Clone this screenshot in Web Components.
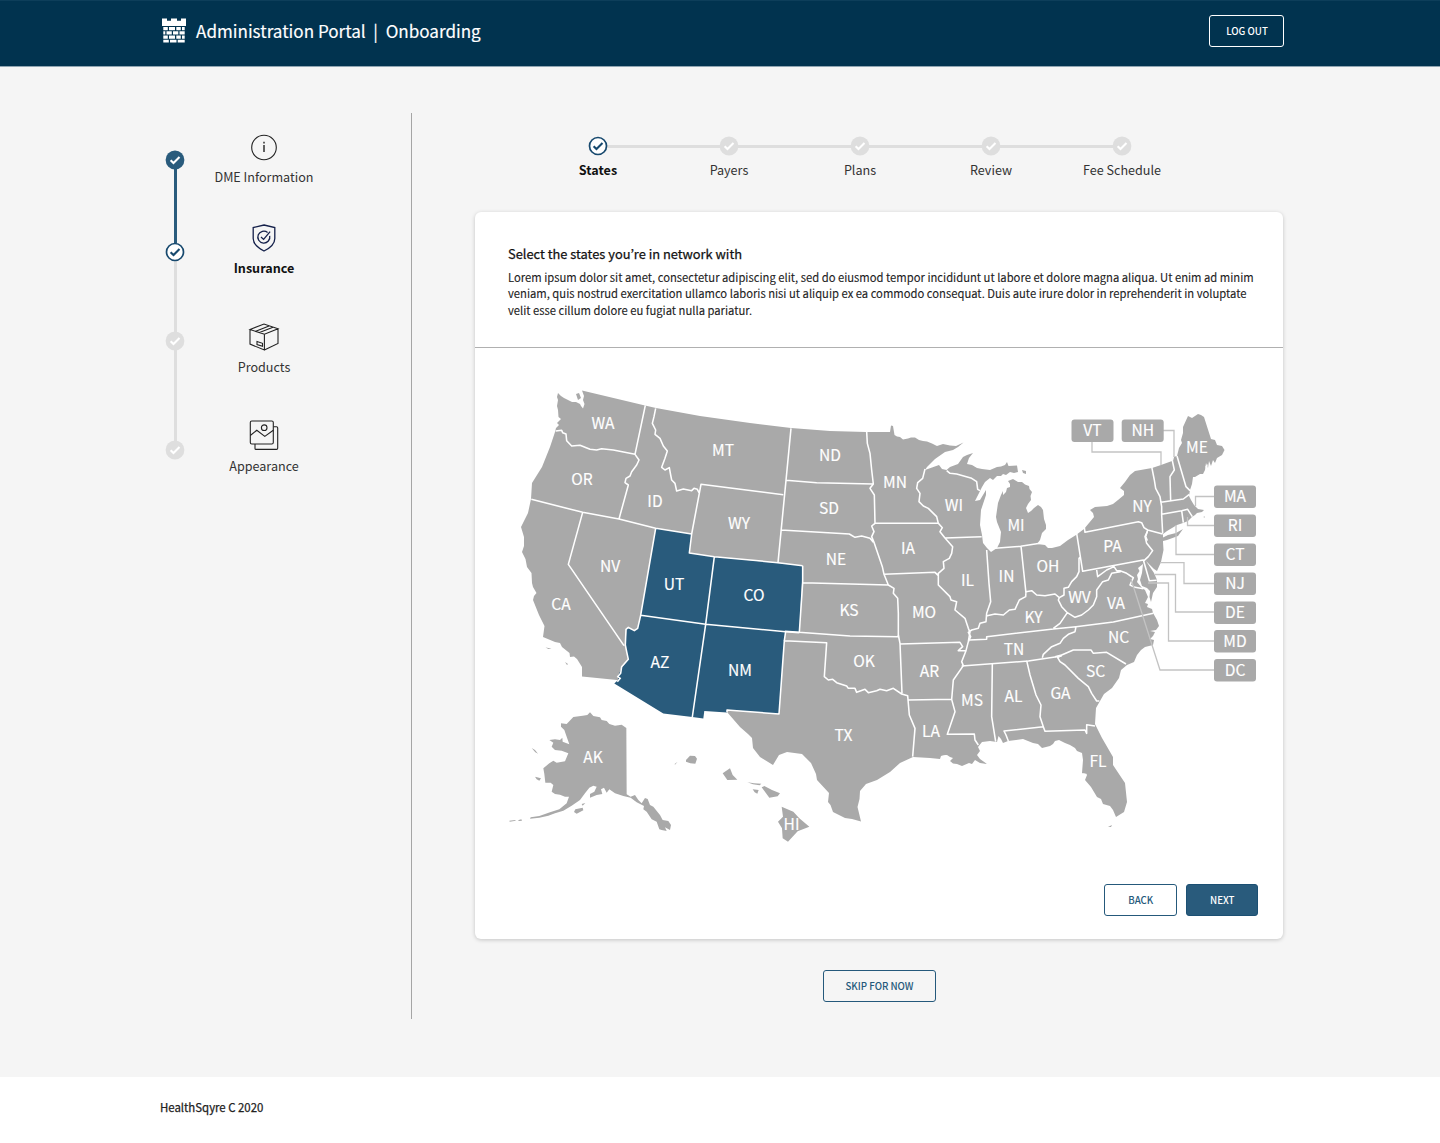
<!DOCTYPE html>
<html lang="en">
<head>
<meta charset="utf-8">
<title>Administration Portal | Onboarding</title>
<style>
body{margin:0;background:#f5f5f5;font-family:"Noto Sans CJK JP","Noto Sans",sans-serif;color:#222}
</style>
</head>
<body>
<onboarding-page></onboarding-page>
<script>
const define=(name,html)=>customElements.define(name,class extends HTMLElement{
  connectedCallback(){
    if(this.shadowRoot)return;
    const t=document.createElement('template');
    t.innerHTML=typeof html==='function'?html(this):html;
    this.attachShadow({mode:'open'}).append(t.content.cloneNode(true));
  }
});

define('castle-logo',`<style>:host{display:block;width:24px;height:25px}svg{display:block}</style>
<svg width="24" height="25" viewBox="0 0 24 25" fill="#fff">
<path d="M0 .5h5v2.300h4V.5h6v2.300h4V.5h5V8H0z"/>
<path d="M1.300 9h4.500v3.300H1.300zM7 9h6v3.300H7zM14.300 9h4.500v3.300h-4.500zM20 9h2.700v3.300H20zM1.300 13.300h2v3.200h-2zM4.500 13.300h5.300v3.200H4.500zM11 13.300h5.300v3.200H11zM17.500 13.300h5.200v3.200h-5.200zM1.300 17.500h4.500v3.200H1.300zM7 17.500h6v3.200H7zM14.300 17.500h4.500v3.200h-4.500zM20 17.500h2.700v3.200H20zM1.300 21.700h5.500v2.800H1.300zM8 21.700h6.500v2.800H8zM15.700 21.700h7v2.800h-7z"/></svg>`);

define('app-button',`<style>
:host{display:block}
button{box-sizing:border-box;display:block;width:100%;height:32px;padding:0 0 0 1px;border:1px solid #25597b;border-radius:3px;background:#fff;color:#25597b;font:500 9.700px/30px "Noto Sans CJK JP","Noto Sans",sans-serif;text-align:center}
:host([kind=solid]) button{background:#295b7c;border-color:#1c5073;color:#fff}
:host([kind=ghost]) button{background:transparent;border-color:#fff;color:#fff}
:host([kind=plain]) button{background:transparent}
</style><button><slot></slot></button>`);

define('app-header',`<style>
:host{display:flex;box-sizing:border-box;height:67px;padding:0 156px 5px 162px;align-items:center;justify-content:space-between;background:#01334f;border-top:1px solid #0d3e5a;border-bottom:1px solid #8fa5b2}
.brand{display:flex;align-items:center;gap:10px;color:#fff;font-size:17.080px;line-height:26px}
.brand span{white-space:pre;-webkit-text-stroke:.15px}
castle-logo{margin-top:-1px}
app-button{width:75px}
</style><div class="brand"><castle-logo></castle-logo><span><slot></slot></span></div><app-button kind="ghost">LOG OUT</app-button>`);

define('check-dot',el=>{
  const s=el.getAttribute('state');
  const fill=s==='done'?'#295b7c':s==='current'?'#fff':'#dedede', mark=s==='current'?'#17496e':'#fff';
  return `<style>:host{display:block;width:20px;height:20px;position:relative}svg{display:block}</style>
<svg width="20" height="20" viewBox="0 0 20 20"><circle cx="10" cy="10" r="${s==='current'?8.5:9.4}" fill="${fill}" ${s==='current'?'stroke="#17496e" stroke-width="1.700"':''}/>
<path d="M5.600 10.200l2.900 2.900 6-6" fill="none" stroke="${mark}" stroke-width="2.100"/></svg>`});

const icons={
 info:`<circle cx="15" cy="14.500" r="12.300"/><path d="M15 12v7M15 8.800v1.700" stroke-width="1.400"/>`,
 shield:`<g stroke="#14204a" stroke-width="1.300"><path d="M15 2l10.800 2.600v10.800c0 5.400-5.500 9.900-10.800 12.600C9.700 25.300 4.200 20.800 4.200 15.400V4.600z"/><path d="M18.600 9.400a6 6 0 1 0 2.100 3.400"/><path d="M12 14l2.600 2.400 6.500-7.800"/></g>`,
 box:`<path d="M1 7.500L15 2l14 4.800-13.600 5.400zM1 7.500v14.600L15.400 28V12.200M15.400 28L29 21.500V6.800M6.800 9.200L20 3.900M10.500 10.500L24 5.200M8 19.500l5.500 1.800v3l-5.500-1.800z"/>`,
 image:`<rect x="1.300" y="1" width="23" height="23" rx="1.500"/><path d="M6 24v4.400q0 1 1 1h20.500q1.200 0 1.200-1.200V8q0-1.200-1.200-1.200h-3M1.300 15.500l6.500-5.300 8 6.200 8.500-6.200"/><circle cx="15.200" cy="7.700" r="2.800"/>`
};
define('side-step',el=>`<style>
:host{display:flex;flex-direction:column;align-items:center;gap:5px}
:host([icon=info]){gap:4px}:host([icon=image]){gap:6px}
svg{display:block;overflow:visible}
.l{font-size:12.600px;line-height:20px;white-space:nowrap;color:#333}
:host([current]) .l{font-weight:700;color:#111}
</style><svg width="30" height="30" viewBox="0 0 30 30" fill="none" stroke="#222" stroke-width="1.100">${icons[el.getAttribute('icon')]}</svg><div class="l"><slot></slot></div>`);

define('side-nav',`<style>
:host{display:flex;box-sizing:border-box;width:252px;height:906px;border-right:1px solid #a5a5a5;padding:20px 0 0 5px}
.rail{display:flex;flex-direction:column;align-items:center;width:20px;padding-top:17px}
.line{width:3px;height:74px;margin:-1px 0;background:#dedede}
.steps{display:flex;flex-direction:column;align-items:center;width:158px}
side-step:nth-child(2){margin-top:36px}side-step:nth-child(3){margin-top:44px}side-step:nth-child(4){margin-top:43px}
</style>
<div class="rail"><check-dot state="done"></check-dot><div class="line" style="background:#295b7c"></div><check-dot state="current"></check-dot><div class="line" style="height:71px"></div><check-dot></check-dot><div class="line" style="height:91px"></div><check-dot></check-dot></div>
<div class="steps"><side-step icon="info">DME Information</side-step><side-step icon="shield" current>Insurance</side-step><side-step icon="box">Products</side-step><side-step icon="image">Appearance</side-step></div>`);

define('top-step',el=>`<style>
:host{display:block;width:131px}
.d{display:flex;align-items:center}.d i{flex:1;height:3px;background:#dedede;margin:0 -1px}
:host([first]) .d i:first-child,:host([last]) .d i:last-child{background:none}
.l{text-align:center;font-size:12.600px;line-height:20px;margin-top:4px;color:#333}
:host([first]) .l{font-weight:700;color:#111}
</style><div class="d"><i></i><check-dot state="${el.hasAttribute('first')?'current':''}"></check-dot><i></i></div><div class="l"><slot></slot></div>`);

const labels=[['WA',603,423.5],['OR',582,479.5],['ID',655,501.5],['MT',723,450],['WY',739,523.5],['ND',830,455.500],['SD',829,508],['NE',836,559.5],['KS',849,610.500],['MN',895,482],['WI',954,505.5],['MI',1016,525.500],['IA',908,548.500],['IL',967.500,580],['IN',1006.500,576.500],['OH',1048,566.500],['MO',924,612],['NV',610,566.500],['UT',674,584],['CO',754,595.500],['CA',561,604],['AZ',660,662],['NM',740,670],['AK',593,757.5],['HI',791.500,824],['TX',843.500,735.500],['OK',864,661.500],['AR',929.500,671.500],['LA',931,731],['MS',972,700.500],['AL',1013.500,696.500],['GA',1060.500,693.500],['SC',1095.500,671.500],['NC',1118.500,637.500],['TN',1014,649],['KY',1033.500,617],['WV',1079.5,597.5],['VA',1116,603.500],['PA',1112.500,546.500],['NY',1142,506],['ME',1197,447],['FL',1098,761.500]];
const tags=[['VT',1071.5,419.5],['NH',1121.7,419.5],['MA',1214,485.5],['RI',1214,514.5],['CT',1214,543.5],['NJ',1214,572.5],['DE',1214,601.5],['MD',1214,630],['DC',1214,659]];
define('state-map',`<style>
:host{display:block;height:520px}svg{display:block}
.land{fill:#a9a9a9}.on{fill:#295b7c}
.b path{fill:none;stroke:#fff;stroke-width:1.550;stroke-linejoin:round;vector-effect:non-scaling-stroke}
.water{fill:#fff}
.lead{fill:none;stroke:#c3c3c3;stroke-width:1.300}
text{font:15.600px "Noto Sans CJK JP","Noto Sans",sans-serif;fill:#fff;stroke:#fff;stroke-width:.15px;text-anchor:middle}
</style>
<svg width="808" height="520" viewBox="475 348 808 520">
<path class="land" d="M558 393L561 396 564 398 568 400 572 402 576 402 580 404 581 406 583 408.500 584.500 404 583 400 584 396 582 390.500 645 405.500 656 408 700 416 750 423 791 428 830 431 866 432 890 432 891 425.500 893 426 894.500 435 897 436.500 900 437 903 439.500 908 438.500 911 437.500 915 437.500 919 440 923 441 927 441.500 932 443.500 937 446 943 444 950 445.500 956 446 963.500 442.500 958 447 953 450 945 452 935 459 927 467 925 470 932 467.500 939 465 942 469 946.500 470 950 467 958 464 963 457 967 455 973 453 969 458 967 464 972 465 977 468 982 469 990 470 997 467 1001 466.500 1005 465 1007 462 1008.500 466 1017 465.500 1018 472 1014 473 1010 472 1006 475 1003 474 1001 476 997 476 993 480 990 478 985 482 982 487 977 497 975 501 980 500 986 490 986 495 981 510 980 525 982 535 983 543 987 548 991 552 997 548 1000 542 1001 532 997 522 996 517 998 503 1001 495 1003 491 1003 495 1006 492 1007 488 1010 487 1010 484 1008 481 1013 479 1018 482 1022 482 1025 484.500 1029 486 1029.500 489 1032 492 1030.500 496 1031 500 1028 504 1026 508 1028 513 1031 511 1034 508 1038 505 1041 507 1043 510 1044 519 1046 525 1046 529 1042 533 1040 540 1037 544 1045 545 1048 548 1052 548 1060 546 1068 540 1076 535 1084 529 1089 523 1094 517 1093 513 1090 510 1095 507 1107 506 1113 504 1118 500 1124 495 1124 491 1120 488 1125 482 1130 475 1135 471 1152 468 1161 465 1172 461 1173 457 1177 456 1179 448 1182 443 1181 440 1183 433 1183 427 1188 416 1192 418 1198 414 1201 415 1204 417 1211 439 1215 440 1217 445 1222 446 1224.500 450 1222 455 1217 458 1215 463 1213 460 1211 466 1209 461 1208 468 1206 463 1205 470 1203 474 1200 474 1195 477 1193 477 1192 484 1190 490 1189 496 1191 500 1194 505 1198 509 1204 510 1202 512 1197 513 1195 515 1192 517 1188 521 1183 523 1177 525 1167 531 1163 534 1163 542 1163.500 550 1161 562 1157 571 1154 569 1148 563 1146 561 1150 567 1154 573 1157 580 1157 587 1153 593 1151 602 1149.500 597 1150 591 1147 588 1142 586 1140 580 1142 573 1143 564 1138 568 1139.500 571 1137 575 1138 579 1137 582 1142 588 1145 590 1148 597 1145 603 1148 604 1147 607 1152 609 1153 613 1157 620 1159 626 1156 630 1150 631 1155 632 1153 636 1150 639 1154 640 1153 645 1145 647 1141 650 1137 655 1134 662 1127 665 1121 670 1119 678 1112 688 1104 694 1100 701 1096 708 1095 724 1102 738 1113 757 1113 765 1125 783 1127 802 1124 812 1116 817 1113 810 1110 806 1103 804 1101 799 1097 797 1091 787 1085 780 1087 775 1082 773 1083 760 1082 753 1077 751 1075 748 1070 745 1065 743 1059 740 1055 741 1053 744 1050 746 1042 748 1038 744 1033 743 1023 739 1008 741 1003 743 1001 739 998.500 736 997 742 990 741 982 742 978 747 980 751 977 755 980 759 987 764 980 763 975 760 972 764 969 763 962 766 957 764 953 763.500 950 761 953 758 950 757 947 755 941 756 940 759 930 758 913 757 900 763 890 772 877 780 866 784 860 791 859.500 799 857.500 807 861 821.500 852 819 845 818 833 812 830.500 805 828 802 829 793 817 780 816 774 811 763 802 754 787 752 779 755 773 765 760 757 753 748 752 738 748 734 740 727 727 712 690 700 617 680 582 676.500 582 667 577 659 574 656.500 570 657 569.500 653 562 647 560 643 555 642 543 637 544.500 626 539 615 533 600 534 596 536.500 593 533 587 532 583 531.500 573 527 567 525.500 559 522 552 524 546 524 537 521 527 524 521 528 513 531 499 532 483 542 467 550 447 555 432 556 428 559 425 557 423 561 419 558.500 417 558 410 557 406 558 400 557 397z"/>
<path class="land" d="M1162 538l6-3 8-2 7-4-5 7-11 4-4 1zM576 394l3-1 2 5-3 2zM1022 470l4 1v3l-3-1zM545.500 647.500l3 .5 3 .5-3 .5zM565 662l3 2-1 1zM1108 827l4-2-1 2zM1203 517l2-.5v1z"/>
<path class="water" d="M1083 773l4 1-2 3zM1205 467l3-3-1 4zM941 756l5-1 4 3-5 1z"/>
<g transform="translate(500 600) scale(.33333)" class="land">
<path d="M183 370L200 372 220 351 248 347 262 345 270 337 280 348 300 352 305 360 320 363 328 372 345 377 365 374 379 384 380 583 392 590 405 585 415 600 425 610 435 594 443 597 450 615 460 620 480 645 488 660 505 663 513 675 510 690 495 682 500 693 485 690 478 688 470 665 455 658 440 635 430 628 432 618 410 607 392 593 370 588 345 580 328 568 320 578 312 563 303 568 307 582 290 585 270 593 270 582 283 575 290 560 280 557 268 563 255 580 240 600 215 617 190 632 165 640 145 647 118 653 90 656 92 652 118 648 150 637 178 628 200 610 207 590 195 590 180 584 165 582 155 575 160 555 152 548 136 548 133 522 130 505 148 490 160 482 170 488 195 484 205 460 185 452 165 450 155 440 160 428 148 420 165 418 180 420 187 413 188 425 208 433 200 410 193 390 183 380z"/>
<path d="M95 444l10 6 9 11-8-4zM105 530l18 5-5 7-8-4zM226 628l22-5 2 8-20 10-8-5zM28 662l18-2 1 2-18 3zM54 661l10-3 2 4-9 1zM245 612l11-3-8 8zM524 492l9-7-8 9zM558 480l12-13 15 1 6 8-5 15-15-1-13-5zM668 520l22-15 8 20 14 14-30 1z"/>
</g>
<g transform="translate(740 600) scale(.33333)" class="land"><path d="M22 547l20 3 22 1-5 5-20-3zM38 568l18 2-4 11-8-4zM65 562l8-4 23 12 24 10-7 9-25 4zM125 620l35 15 18 20 30 25-35 14-29 31-16-10-2-30-12-20 15-15z"/></g>
<path class="on" d="M655.700 528.300L691.700 534 689.300 553 714.300 556.700 802.700 565.700 799.300 632.500 785.500 631.500 784.300 640.700 779 714 727 709.800 727 712.500 704.300 711 703.300 718.500 692.300 717 663.300 713.500 614.300 683.500 618 680 618 676 621.700 668 628.300 659.500 625.300 645 626.700 628 634 630.500 637.700 628.300 640.700 615.300z"/>
<g class="b">
<g transform="translate(500 370) scale(.33333)"><path d="M436 106L405 253M167 183L185 181 188 188 198 192 200 212 215 228 240 226 270 238 290 240 305 236 340 240 405 253 417 270 410 285 395 305 390 318 378 325 375 338 385 345 357 447M94 388L248 427 357 447 467 475 575 492M467 115L462 140 457 160 467 180 465 193 480 205 490 228 502 243 495 265 485 292 495 300 508 293 512 315 515 330 525 340 530 363 550 357 575 362 582 355 592 358 597 368M850 374L780 365 603 343 575 492 568 549 643 560 834 578 908 587M467 475L422 736 617 763 857 785 898 788M248 427L205 583 372 827M643 560L617 763 577 1041M422 736L413 775 403 782 385 772 378 778 376 825 380 845 385 868 365 890 362 910 353 920 361 925 352 935"/></g>
<g transform="translate(750 400) scale(.33333)"><path d="M123 85L108 241 84 488M108 241L200 248 370 252M93 390L298 402 315 412 335 408 360 415 370 427M158 497L158 548 415 555M158 548L148 697 106 694 300 708 445 710 445 640 443 595 430 580 432 565 415 555M350 95L352 130 360 160 365 210 370 252 360 265 373 285 375 370 565 370M375 370L365 378 372 395 365 410 372 427 385 465 397 500 402 523 415 555M402 523L555 517 565 527M525 207L518 235 503 248 500 265 510 280 507 305 520 318 535 325 560 350 565 370 577 383 570 395 585 414 608 440 605 460 598 475 580 485 582 505 565 520 565 555 600 590 603 600 620 605 615 630 645 655 655 685 660 697M585 414L695 410M590 212L600 220 620 222 665 235 680 245 683 268 690 272M710 450L717 550 722 605 710 640 708 665 690 670 685 685 665 690 655 697 662 710 655 725"/></g>
<g transform="translate(960 530) scale(.33333)"><path d="M105 55L182 49 240 40M183 48L198 190M78 258L105 252 130 255 148 240 165 238 178 210 197 200 198 185 215 182 230 195 255 197 285 192 298 203 312 195 312 175 325 172 335 155 350 140 357 125 357 85 362 80M350 10L368 124 550 90 556 110 568 152 590 151M410 120L413 140 440 120 462 110 470 122 480 122 500 130 512 138 520 143 510 165 525 172 550 176M482 125L463 128 455 130 445 150 428 155 410 180 410 200 400 225 385 240 365 255 345 262 322 248 300 280 280 295M298 203L295 210 305 230 322 248M28 330L80 328 80 320 280 297 348 290 460 276 580 250M348 290L345 305 325 313 310 325 300 340 275 350 250 373 247 383M5 408L205 393 305 378M562 5L555 20 560 40 578 62 565 80 552 92"/></g>
<g transform="translate(960 400) scale(.33333)"><path d="M373 382L375 397 535 365 545 368 552 383 563 390 608 402M563 390L557 410 562 422M575 200L583 240 587 265 600 290 605 320 605 345 608 400M603 307L670 297 688 283M637 182L643 210 630 230 632 302M640 170L637 182M651 168L678 260 690 272M605 343L665 332 683 328 697 350M665 332L670 368"/></g>
<g transform="translate(930 620) scale(.33333)"><path d="M187 130L185 290 197 365M290 122L300 165 318 225 333 255 330 290 340 320 222 333 228 345 235 363M340 320L345 334 465 330 470 340 470 314 495 318M395 105L383 113 390 125 405 135 445 175 475 200 485 220 500 243 508 243M375 110L395 105 430 90 483 90 490 100 530 97 588 132"/></g>
<g transform="translate(740 600) scale(.33333)"><path d="M137 94L133 122 260 128 253 230 265 240 278 238 290 248 320 258 325 265 345 265 350 277 375 268 385 278 410 272 420 268 440 272 460 265 485 282 503 287 508 345 525 385 518 470M475 105L480 130 486 280M480 132L660 127 668 140 655 152 678 152M505 300L635 298M690 95L685 125 678 152 665 185 670 197 640 240 635 298 645 335 622 403 703 402 705 420 715 435M133 122L117 342 0 333 -39 330 -39 337"/></g>
</g>
<g class="lead"><path d="M1092 442V452H1161V465M1163 430.500H1174V457M1214 496.500H1195.500V506M1214 525.500H1187.500V517M1214 554.500H1176V525M1214 583.500H1184V562.700H1160M1214 612H1175.500V574.500H1155M1214 641H1168.500V583H1148M1214 670H1160L1131 579"/></g>
${tags.map(([s,x,y])=>`<rect class="land" x="${x}" y="${y}" width="42" height="22.500" rx="3"/>`).join('')}
${labels.map(([s,x,y])=>`<text x="${x}" y="${y+5.5}">${s}</text>`).join('')}
${tags.map(([s,x,y])=>`<text x="${x+21}" y="${y+16.8}">${s}</text>`).join('')}
</svg>`);

define('state-card',`<style>
:host{display:block;box-sizing:border-box;width:808px;height:727px;background:#fff;border-radius:6px;box-shadow:0 1px 4px rgba(0,0,0,.2)}
.intro{box-sizing:border-box;height:136px;padding:32px 28px 0 33px;border-bottom:1px solid #b0b0b0}
h1{margin:0;font-size:12.850px;line-height:20px;font-weight:400;-webkit-text-stroke:.25px;color:#111}
p{margin:4.500px 0 0;font-size:11.240px;line-height:16.500px;color:#222;white-space:nowrap;-webkit-text-stroke:.1px}
.actions{display:flex;justify-content:flex-end;gap:9px;padding:16px 25px 0 0}
.actions app-button{width:72.500px}
</style><div class="intro"><h1>Select the states you’re in network with</h1><p>Lorem ipsum dolor sit amet, consectetur adipiscing elit, sed do eiusmod tempor incididunt ut labore et dolore magna aliqua. Ut enim ad minim<br>veniam, quis nostrud exercitation ullamco laboris nisi ut aliquip ex ea commodo consequat. Duis aute irure dolor in reprehenderit in voluptate<br>velit esse cillum dolore eu fugiat nulla pariatur.</p></div>
<state-map></state-map><div class="actions"><app-button>BACK</app-button><app-button kind="solid">NEXT</app-button></div>`);

define('onboarding-page',`<style>
:host{display:block;height:1143px}
main{display:flex;box-sizing:border-box;height:1010px;padding:46px 0 0 160px}
.content{display:flex;flex-direction:column;align-items:center;width:808px;margin-left:63px;padding-top:23px}
.steps{display:flex;align-self:flex-start;margin:0 0 32px 57.500px}
.skip{width:113px;margin-top:31px}
footer{box-sizing:border-box;height:66px;padding:20px 160px;background:#fff;font-size:11.400px;line-height:20px;-webkit-text-stroke:.25px}
</style><app-header>Administration Portal  |  Onboarding</app-header>
<main><side-nav></side-nav><div class="content"><div class="steps"><top-step first>States</top-step><top-step>Payers</top-step><top-step>Plans</top-step><top-step>Review</top-step><top-step last>Fee Schedule</top-step></div>
<state-card></state-card><app-button class="skip" kind="plain">SKIP FOR NOW</app-button></div></main>
<footer>HealthSqyre C 2020</footer>`);
</script>
</body>
</html>
